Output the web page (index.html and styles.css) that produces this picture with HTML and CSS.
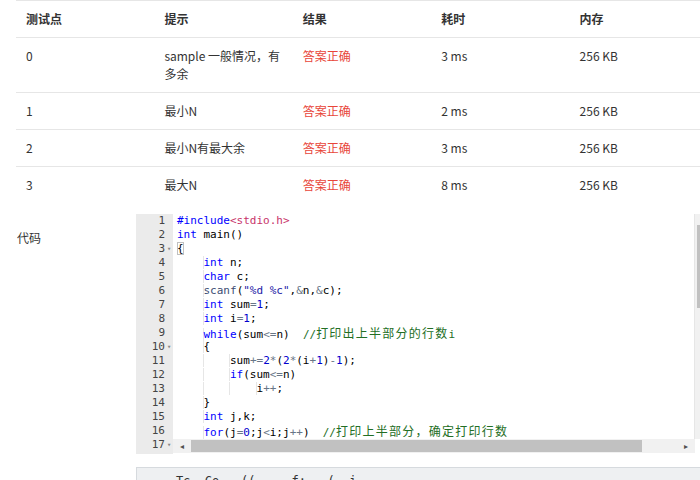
FILE: index.html
```html
<!DOCTYPE html>
<html lang="zh-CN">
<head>
<meta charset="utf-8">
<title>评测结果</title>
<link rel="stylesheet" href="styles.css">
</head>
<body>
<table class="results">
  <thead>
    <tr><th>测试点</th><th>提示</th><th>结果</th><th>耗时</th><th>内存</th></tr>
  </thead>
  <tbody>
    <tr><td>0</td><td>sample 一般情况，有多余</td><td class="ok">答案正确</td><td>3 ms</td><td>256 KB</td></tr>
    <tr><td>1</td><td>最小N</td><td class="ok">答案正确</td><td>2 ms</td><td>256 KB</td></tr>
    <tr><td>2</td><td>最小N有最大余</td><td class="ok">答案正确</td><td>3 ms</td><td>256 KB</td></tr>
    <tr><td>3</td><td>最大N</td><td class="ok">答案正确</td><td>8 ms</td><td>256 KB</td></tr>
  </tbody>
</table>

<div class="code-row">
  <div class="code-label">代码</div>
  <div class="editor">
    <div class="gutter">
      <div class="gl"><span>1</span><i></i></div>
      <div class="gl"><span>2</span><i></i></div>
      <div class="gl"><span>3</span><i>▾</i></div>
      <div class="gl"><span>4</span><i></i></div>
      <div class="gl"><span>5</span><i></i></div>
      <div class="gl"><span>6</span><i></i></div>
      <div class="gl"><span>7</span><i></i></div>
      <div class="gl"><span>8</span><i></i></div>
      <div class="gl"><span>9</span><i></i></div>
      <div class="gl"><span>10</span><i>▾</i></div>
      <div class="gl"><span>11</span><i></i></div>
      <div class="gl"><span>12</span><i></i></div>
      <div class="gl"><span>13</span><i></i></div>
      <div class="gl"><span>14</span><i></i></div>
      <div class="gl"><span>15</span><i></i></div>
      <div class="gl"><span>16</span><i></i></div>
      <div class="gl"><span>17</span><i>▾</i></div>
    </div>
    <div class="code">
      <div class="ln"><span class="kw">#include</span><span class="inc">&lt;stdio.h&gt;</span></div>
      <div class="ln"><span class="kw">int</span> main()</div>
      <div class="ln"><span class="br">{</span></div>
      <div class="ln"><span class="ig">    </span><span class="kw">int</span> n;</div>
      <div class="ln"><span class="ig">    </span><span class="kw">char</span> c;</div>
      <div class="ln"><span class="ig">    </span><span class="fn">scanf</span>(<span class="str">"%d %c"</span>,<span class="op">&amp;</span>n,<span class="op">&amp;</span>c);</div>
      <div class="ln"><span class="ig">    </span><span class="kw">int</span> sum<span class="op">=</span><span class="num">1</span>;</div>
      <div class="ln"><span class="ig">    </span><span class="kw">int</span> i<span class="op">=</span><span class="num">1</span>;</div>
      <div class="ln"><span class="ig">    </span><span class="kw">while</span>(sum<span class="op">&lt;=</span>n)  <span class="cm">//<span class="cjk">打印出上半部分的行数</span>i</span></div>
      <div class="ln"><span class="ig">    </span>{</div>
      <div class="ln"><span class="ig">    </span><span class="ig">    </span>sum<span class="op">+=</span><span class="num">2</span><span class="op">*</span>(<span class="num">2</span><span class="op">*</span>(i<span class="op">+</span><span class="num">1</span>)<span class="op">-</span><span class="num">1</span>);</div>
      <div class="ln"><span class="ig">    </span><span class="ig">    </span><span class="kw">if</span>(sum<span class="op">&lt;=</span>n)</div>
      <div class="ln"><span class="ig">    </span><span class="ig">    </span><span class="ig">    </span>i<span class="op">++</span>;</div>
      <div class="ln"><span class="ig">    </span>}</div>
      <div class="ln"><span class="ig">    </span><span class="kw">int</span> j,k;</div>
      <div class="ln"><span class="ig">    </span><span class="kw">for</span>(j<span class="op">=</span><span class="num">0</span>;j<span class="op">&lt;</span>i;j<span class="op">++</span>)  <span class="cm">//<span class="cjk">打印上半部分，确定打印行数</span></span></div>
      <div class="ln"><span class="ig">    </span><span class="kw">for</span>(k<span class="op">=</span><span class="num">0</span>;k<span class="op">&lt;</span>j;k<span class="op">++</span>)</div>
    </div>
    <div class="vscroll"><div class="vthumb"></div></div>
    <div class="hscroll">
      <span class="arr">◂</span>
      <div class="hthumb"></div>
      <span class="arr">▸</span>
    </div>
  </div>
</div>

<div class="output">    Tc  Co   ((     f:   (  i</div>
</body>
</html>
```

FILE: styles.css
```css
html, body {
  margin: 0;
  padding: 0;
  overflow: hidden;
  background: #fff;
}

body {
  font-family: "Noto Sans CJK SC", "Noto Sans", sans-serif;
  font-size: 12px;
  color: #333;
  width: 700px;
  height: 480px;
}

.results {
  margin-left: 16px;
  width: 692px;
  table-layout: fixed;
  border-collapse: collapse;
}

.results th,
.results td {
  padding: 9px 10px;
  line-height: 18px;
  border-top: 1px solid #e6e6e6;
  text-align: left;
  vertical-align: top;
}

.results th {
  font-weight: bold;
  color: #333;
}

.results td.ok {
  color: #e8463a;
}

.code-row {
  display: flex;
  margin-top: 11px;
}

.code-label {
  width: 136px;
  flex: none;
  box-sizing: border-box;
  padding: 15px 0 0 17px;
  line-height: 18px;
}

.editor {
  position: relative;
  flex: none;
  width: 576px;
  height: 240px;
  overflow: hidden;
  display: flex;
  background: #fff;
  font-family: "DejaVu Sans Mono", "Liberation Mono", monospace;
  font-size: 11px;
}

.gutter {
  width: 37px;
  flex: none;
  background: #ebebeb;
  color: #444;
}

.gl {
  display: flex;
  justify-content: flex-end;
  height: 14px;
  line-height: 14px;
}

.gl i {
  font-style: normal;
  width: 8px;
  font-size: 7px;
  color: #888;
  text-align: center;
}

.code {
  flex: 1;
  padding-left: 4px;
  color: #000;
}

.ln {
  height: 14px;
  line-height: 14px;
  white-space: pre;
}

.ig {
  box-shadow: inset -1px 0 0 #e6e6e6;
}

.kw { color: #0000ff; }
.inc { color: #c8336a; }
.fn { color: #3c4c72; }
.str { color: #1a1aa6; }
.op { color: #687687; }
.num { color: #0000cd; }
.cm { color: #236e24; }

.cjk {
  font-family: "Noto Sans CJK SC", sans-serif;
  font-size: 12px;
  letter-spacing: 1.24px;
}

.br {
  outline: 1px solid #c0c0c0;
  outline-offset: -1px;
}

.vscroll {
  position: absolute;
  top: 0;
  right: 0;
  width: 17px;
  height: 225px;
  background: #f1f1f1;
  border-left: 1px solid #e6e6e6;
}

.vthumb {
  margin: 11px 2px 0;
  height: 83px;
  background: #c1c1c1;
}

.hscroll {
  position: absolute;
  left: 37px;
  right: 17px;
  top: 225px;
  height: 14px;
  background: #f1f1f1;
  display: flex;
  align-items: center;
}

.arr {
  width: 18px;
  flex: none;
  font-size: 8px;
  color: #505050;
  text-align: center;
  font-family: "DejaVu Sans", sans-serif;
}

.hthumb {
  width: 451px;
  height: 12px;
  background: #c1c1c1;
}

.hscroll .arr:last-child {
  margin-left: auto;
}

.output {
  margin: 13px 0 0 136px;
  height: 40px;
  background: #eef0f2;
  border-top: 1px solid #d6dade;
  border-left: 1px solid #d6dade;
  padding: 6px 0 0 10px;
  font-family: "DejaVu Sans Mono", monospace;
  font-size: 12px;
  white-space: pre;
  color: #333;
}
```
